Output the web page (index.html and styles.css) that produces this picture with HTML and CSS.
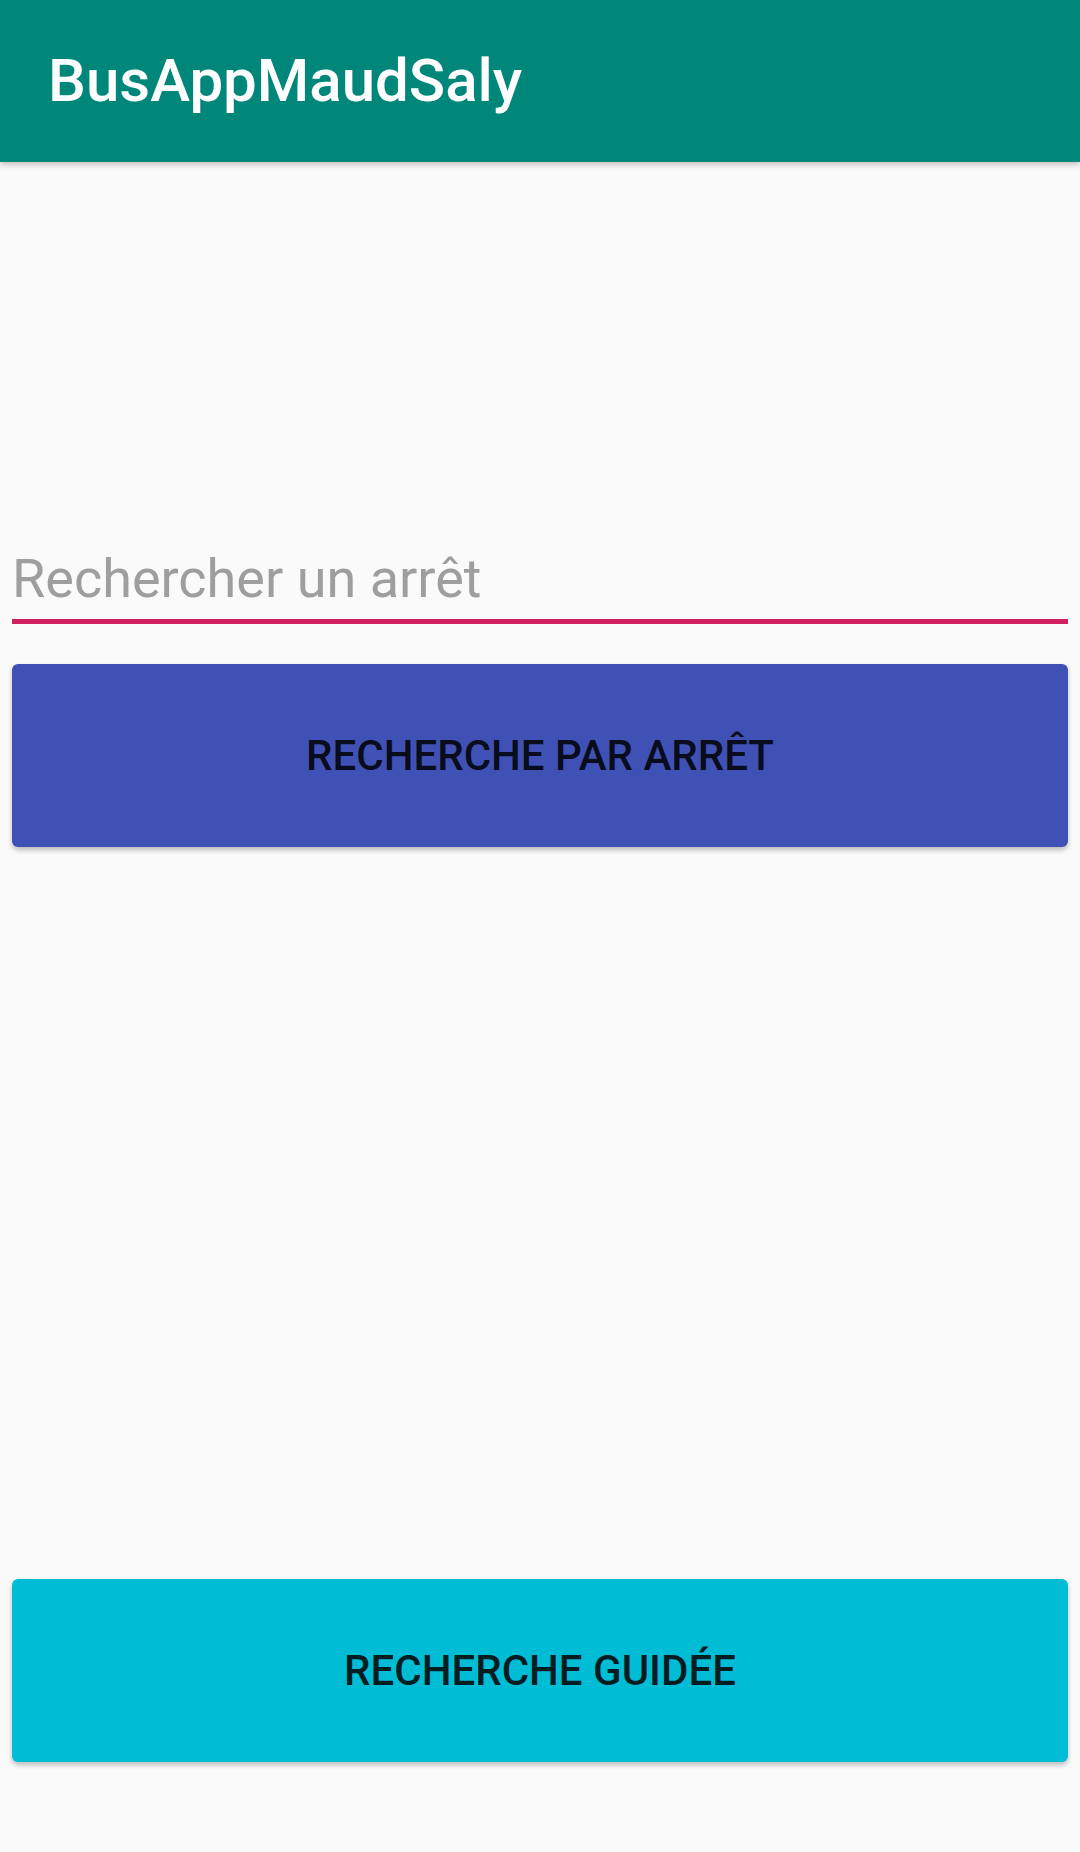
FILE: index.html
```html
<!DOCTYPE html>
<html lang="fr">
<head>
<meta charset="utf-8">
<title>BusAppMaudSaly</title>
<link rel="stylesheet" href="styles.css">
</head>
<body>
<header class="toolbar">
  <h1 class="toolbar-title">BusAppMaudSaly</h1>
</header>
<main class="content">
  <div class="field">Rechercher un arrêt</div>
  <button class="btn btn-indigo">RECHERCHE PAR ARRÊT</button>
  <button class="btn btn-cyan">RECHERCHE GUIDÉE</button>
</main>
</body>
</html>
```
FILE: styles.css
```css
html, body {
  margin: 0;
  padding: 0;
}
body {
  width: 1080px;
  height: 1852px;
  background: #fafafa;
  font-family: Roboto, "Noto Sans", sans-serif;
  overflow: hidden;
}
.toolbar {
  height: 162px;
  background: #00877a;
  display: flex;
  align-items: center;
  padding-left: 48px;
  box-sizing: border-box;
  box-shadow: 0 3px 6px rgba(0,0,0,0.22);
  position: relative;
  z-index: 1;
}
.toolbar-title {
  margin: 0;
  color: #ffffff;
  font-size: 60px;
  font-weight: 500;
  line-height: 1;
}
.content {
  height: 1690px;
  padding: 0 12px;
  box-sizing: border-box;
  display: flex;
  flex-direction: column;
}
.field {
  margin-top: 390px;
  font-size: 54px;
  line-height: 54px;
  color: #9e9e9e;
  padding-bottom: 13px;
  border-bottom: 5px solid #d0205e;
}
.btn {
  display: flex;
  align-items: center;
  justify-content: center;
  height: 183px;
  border: none;
  border-radius: 6px;
  font-family: Roboto, "Noto Sans", sans-serif;
  font-size: 42px;
  font-weight: 500;
  color: rgba(0,0,0,0.87);
  box-shadow: 0 3px 5px rgba(0,0,0,0.25);
  padding: 0;
  width: 100%;
}
.btn-indigo {
  margin-top: 40px;
  background: #3f51b5;
}
.btn-cyan {
  margin-top: auto;
  margin-bottom: 90px;
  background: #00bcd4;
}
```
